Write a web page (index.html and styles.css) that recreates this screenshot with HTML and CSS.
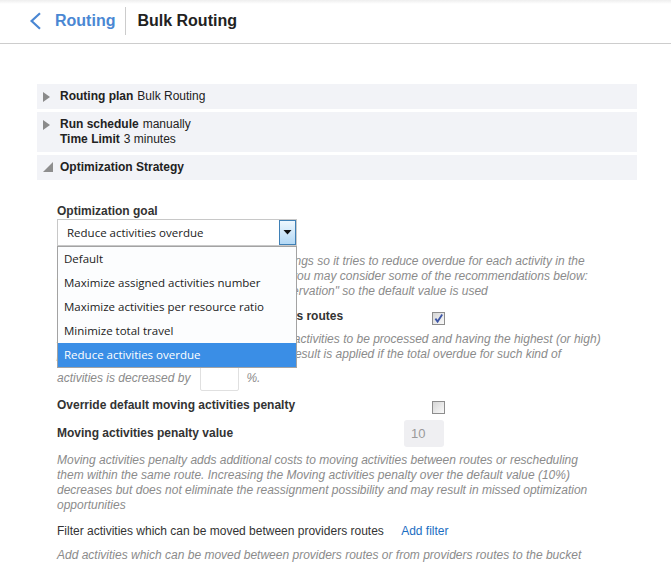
FILE: index.html
```html
<!DOCTYPE html>
<html lang="en">
<head>
<meta charset="utf-8">
<title>Bulk Routing</title>
<link rel="stylesheet" href="styles.css">
</head>
<body>
<header class="topbar">
  <a class="back" href="#" aria-label="Back">
    <svg width="13" height="18" viewBox="0 0 13 18"><path d="M11 1.2 L2.6 9 L11 16.8" fill="none" stroke="#4a87d3" stroke-width="2.2"/></svg>
  </a>
  <span class="crumb">Routing</span>
  <span class="sep"></span>
  <h1 class="title">Bulk Routing</h1>
</header>

<main class="page">
  <section class="panel">
    <div class="bar">
      <span class="bar-icon"><span class="tri-right"></span></span>
      <div class="bar-text">
        <div><b>Routing plan</b><span class="val">Bulk Routing</span></div>
      </div>
    </div>
    <div class="bar">
      <span class="bar-icon"><span class="tri-right"></span></span>
      <div class="bar-text">
        <div><b>Run schedule</b><span class="val">manually</span></div>
        <div><b>Time Limit</b><span class="val">3 minutes</span></div>
      </div>
    </div>
    <div class="bar">
      <span class="bar-icon"><span class="tri-open"></span></span>
      <div class="bar-text">
        <div><b>Optimization Strategy</b></div>
      </div>
    </div>
  </section>

  <div class="form">
    <div class="field-label">Optimization goal</div>
    <div class="select-wrap">
      <div class="select">
        <span class="select-value">Reduce activities overdue</span>
        <span class="select-btn"><svg width="9" height="5" viewBox="0 0 9 5"><path d="M0.5 0 L8.5 0 L4.5 4.5 Z" fill="#111"/></svg></span>
      </div>
      <ul class="options">
        <li>Default</li>
        <li>Maximize assigned activities number</li>
        <li>Maximize activities per resource ratio</li>
        <li>Minimize total travel</li>
        <li class="selected">Reduce activities overdue</li>
      </ul>
    </div>

    <p class="hint lines first">This goal changes all the default routing settings so it tries to reduce overdue for each activity in the<br>routing plan. For better optimization results, you may consider some of the recommendations below:<br>1. If no priority is needed, select "Default reservation" so the default value is used</p>

    <div class="check-row">
      <span class="label">Moves priority activities between providers routes</span>
      <span class="checkbox">
        <svg width="13" height="13" viewBox="0 0 13 13"><defs><linearGradient id="cb1" x1="0" y1="0" x2="1" y2="1"><stop offset="0" stop-color="#d4d4d4"/><stop offset="1" stop-color="#fbfbfb"/></linearGradient></defs><rect x="0.5" y="0.5" width="12" height="12" fill="url(#cb1)" stroke="#8d8d8d"/><path d="M3.4 6.6 L5.6 9.6 L10.2 2.6" fill="none" stroke="#3d56a6" stroke-width="1.8"/></svg>
      </span>
    </div>

    <p class="hint lines second">2. If there is only a small number of overdue activities to be processed and having the highest (or high)<br>priority, enable this option. The optimization result is applied if the total overdue for such kind of</p>

    <div class="pct-row">
      <span class="hint">activities is decreased by</span>
      <span class="pct-input"></span>
      <span class="hint">%.</span>
    </div>

    <div class="check-row override">
      <span class="label">Override default moving activities penalty</span>
      <span class="checkbox">
        <svg width="13" height="13" viewBox="0 0 13 13"><defs><linearGradient id="cb2" x1="0" y1="0" x2="1" y2="1"><stop offset="0" stop-color="#d4d4d4"/><stop offset="1" stop-color="#fbfbfb"/></linearGradient></defs><rect x="0.5" y="0.5" width="12" height="12" fill="url(#cb2)" stroke="#8d8d8d"/></svg>
      </span>
    </div>

    <div class="value-row">
      <span class="label">Moving activities penalty value</span>
      <span class="num-input">10</span>
    </div>

    <p class="hint para">Moving activities penalty adds additional costs to moving activities between routes or rescheduling them within the same route. Increasing the Moving activities penalty over the default value (10%) decreases but does not eliminate the reassignment possibility and may result in missed optimization opportunities</p>

    <div class="filter-row">
      <span class="plain">Filter activities which can be moved between providers routes</span>
      <a class="link" href="#">Add filter</a>
    </div>

    <p class="hint last">Add activities which can be moved between providers routes or from providers routes to the bucket</p>
  </div>
</main>
</body>
</html>
```

FILE: styles.css
```css
* { box-sizing: border-box; }

body {
  margin: 0;
  background: #ffffff;
  font-family: "Liberation Sans", Arial, sans-serif;
  font-size: 12px;
  color: #333333;
}

.topbar {
  display: flex;
  align-items: center;
  height: 44px;
  padding: 0 0 1px 29px;
  border-bottom: 1px solid #cdcdcd;
  background: linear-gradient(#eeeeee 0, #ffffff 4px);
}

.back {
  display: flex;
  width: 13px;
  height: 18px;
}

.crumb {
  margin-left: 13px;
  font-size: 16px;
  font-weight: bold;
  color: #4a87d3;
}

.sep {
  width: 1px;
  height: 28px;
  margin-left: 10px;
  background: #cccccc;
}

.title {
  margin: 0 0 0 11px;
  font-size: 16px;
  font-weight: bold;
  color: #222222;
}

.page {
  padding: 40px 0 0 37px;
}

.panel {
  width: 600px;
  display: flex;
  flex-direction: column;
  gap: 3px;
}

.bar {
  display: flex;
  align-items: flex-start;
  background: #f2f3f7;
  padding: 5px 0 5px 6px;
  line-height: 15px;
  color: #222222;
}

.bar-icon {
  width: 17px;
  flex: none;
  display: flex;
}

.tri-right {
  width: 0;
  height: 0;
  margin-top: 3px;
  border-left: 7px solid #8a8a8a;
  border-top: 5px solid transparent;
  border-bottom: 5px solid transparent;
}

.tri-open {
  width: 0;
  height: 0;
  margin-top: 2px;
  border-bottom: 10px solid #8e8e8e;
  border-left: 10px solid transparent;
}

.bar-text b { font-weight: bold; }
.val { margin-left: 4px; }

.form {
  width: 544px;
  padding: 24px 0 0 20px;
  box-sizing: content-box;
}

.field-label,
.label {
  font-weight: bold;
  color: #333333;
  line-height: 15px;
}

.select-wrap {
  position: relative;
  width: 240px;
}

.select {
  display: flex;
  align-items: stretch;
  height: 27px;
  border: 1px solid #c8c8c8;
  background: #ffffff;
}

.select-value {
  flex: 1;
  padding-left: 9px;
  font-family: "Open Sans", "Noto Sans", sans-serif;
  font-size: 11.5px;
  line-height: 25px;
  color: #222222;
}

.select-btn {
  width: 17px;
  display: flex;
  align-items: center;
  justify-content: center;
  border: 1px solid #3f80b6;
  background: linear-gradient(#eef7fe, #b3d8f5);
}

.options {
  position: absolute;
  top: 100%;
  left: 0;
  width: 240px;
  margin: 0;
  padding: 0;
  list-style: none;
  border: 1px solid #a3a3a3;
  background: #fcfdfe;
  z-index: 5;
}

.options li {
  height: 24px;
  line-height: 24px;
  padding-left: 6px;
  font-family: "Open Sans", "Noto Sans", sans-serif;
  font-size: 11.5px;
  color: #222222;
  white-space: nowrap;
}

.options li.selected {
  background: #3a8ee6;
  color: #ffffff;
}

.hint {
  font-style: italic;
  color: #8b8b8b;
  line-height: 15px;
  margin: 0;
}

.lines { white-space: nowrap; }
.first { margin-top: 8px; }
.second { margin-top: 7px; }

.check-row {
  width: 388px;
  display: flex;
  justify-content: space-between;
  align-items: flex-start;
  margin-top: 10px;
}

.check-row.override { margin-top: 7px; }

.checkbox {
  display: flex;
  width: 13px;
  height: 13px;
  margin-top: 3px;
}

.pct-row {
  display: flex;
  align-items: center;
  margin-top: 3px;
}

.pct-input {
  width: 39px;
  height: 26px;
  margin: 0 7px 0 10px;
  border: 1px solid #e0e0e0;
  border-radius: 2px;
  background: #ffffff;
}

.value-row {
  width: 387px;
  display: flex;
  justify-content: space-between;
  align-items: center;
  margin-top: 6px;
}

.num-input {
  width: 40px;
  height: 27px;
  padding-left: 7px;
  border-radius: 3px;
  background: #efeff2;
  color: #9a9a9a;
  font-size: 13px;
  line-height: 27px;
}

.para { margin-top: 6px; }

.filter-row {
  margin-top: 11px;
  line-height: 15px;
}

.plain { color: #333333; }

.link {
  margin-left: 14px;
  color: #1b6ec2;
  text-decoration: none;
}

.last { margin-top: 9px; }
```
